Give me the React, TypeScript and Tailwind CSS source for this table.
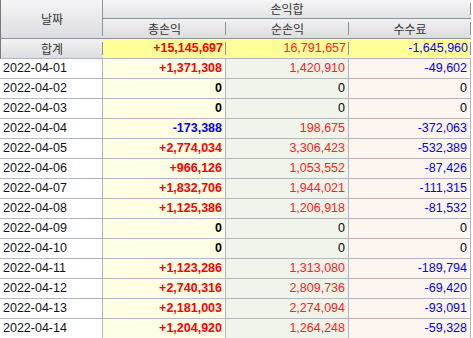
type Row = { date: string; total: string; net: string; fee: string };

const rows: Row[] = [
	{ date: "2022-04-01", total: "+1,371,308", net: "1,420,910", fee: "-49,602" },
	{ date: "2022-04-02", total: "0", net: "0", fee: "0" },
	{ date: "2022-04-03", total: "0", net: "0", fee: "0" },
	{ date: "2022-04-04", total: "-173,388", net: "198,675", fee: "-372,063" },
	{ date: "2022-04-05", total: "+2,774,034", net: "3,306,423", fee: "-532,389" },
	{ date: "2022-04-06", total: "+966,126", net: "1,053,552", fee: "-87,426" },
	{ date: "2022-04-07", total: "+1,832,706", net: "1,944,021", fee: "-111,315" },
	{ date: "2022-04-08", total: "+1,125,386", net: "1,206,918", fee: "-81,532" },
	{ date: "2022-04-09", total: "0", net: "0", fee: "0" },
	{ date: "2022-04-10", total: "0", net: "0", fee: "0" },
	{ date: "2022-04-11", total: "+1,123,286", net: "1,313,080", fee: "-189,794" },
	{ date: "2022-04-12", total: "+2,740,316", net: "2,809,736", fee: "-69,420" },
	{ date: "2022-04-13", total: "+2,181,003", net: "2,274,094", fee: "-93,091" },
	{ date: "2022-04-14", total: "+1,204,920", net: "1,264,248", fee: "-59,328" },
];

function tone(v: string) {
	if (v === "0") return "text-black";
	if (v.startsWith("-")) return "text-[#0000ff]";
	return "text-[#ff0000]";
}

function Sep({ full }: { full?: boolean }) {
	return (
		<span
			className={
				"absolute right-0 w-px bg-[#8e93a0] " +
				(full ? "top-0 bottom-[2px]" : "top-[3px] bottom-[3px]")
			}
		/>
	);
}

function App() {
	const num = "flex items-center justify-end pr-[3px] border-r border-b border-[#b3b3c6]";
	return (
		<div className="w-[473px] h-[338px] overflow-hidden bg-white font-['Liberation_Sans','Noto_Sans_CJK_KR',sans-serif] text-[12.5px]">
			<div className="grid grid-cols-[103px_123px_123px_122px] grid-rows-[19px_20px_20px] auto-rows-[20px]">
				{/* header */}
				<div className="relative row-span-2 flex items-center justify-center border-l border-l-[#7a7a7a] border-b border-b-[#8e93a0] bg-gradient-to-b from-[#f5f5f6] to-[#dcdde1] text-[#333] font-['Noto_Sans_CJK_KR',sans-serif] text-[12px]">
					날짜
					<Sep full />
				</div>
				<div className="relative col-span-3 flex items-center justify-center border-b border-[#8e93a0] bg-gradient-to-b from-[#f5f5f6] to-[#e2e3e6] text-[#333] font-['Noto_Sans_CJK_KR',sans-serif] text-[12px]">
					손익합
					<Sep />
				</div>
				{["총손익", "순손익", "수수료"].map((h) => (
					<div
						key={h}
						className="relative flex items-center justify-center border-b border-[#8e93a0] bg-gradient-to-b from-[#f1f1f2] to-[#dcdde1] text-[#333] font-['Noto_Sans_CJK_KR',sans-serif] text-[12px]"
					>
						{h}
						<Sep />
					</div>
				))}

				{/* sum row */}
				<div className="relative flex items-center justify-center border-l border-l-[#7a7a7a] border-b border-b-[#b3b3c6] bg-gradient-to-b from-[#f3f3f4] to-[#dcdde1] text-[#333] font-['Noto_Sans_CJK_KR',sans-serif] text-[12px]">
					합계
					<Sep />
				</div>
				<div className="relative flex items-center justify-end pr-[3px] border-b border-[#b3b3c6] bg-[#ffff99] font-bold text-[#ff0000]">
					+15,145,697
					<Sep />
				</div>
				<div className="relative flex items-center justify-end pr-[3px] border-b border-[#b3b3c6] bg-[#ffff99] text-[#ff2020]">
					16,791,657
					<Sep />
				</div>
				<div className="relative flex items-center justify-end pr-[3px] border-b border-[#b3b3c6] bg-[#ffff99] text-[#0000ff]">
					-1,645,960
					<Sep />
				</div>

				{/* data rows */}
				{rows.map((r) => (
					<div key={r.date} className="contents">
						<div className="flex items-center pl-[3px] border-r border-b border-[#b3b3c6] bg-white text-[#111]">
							{r.date}
						</div>
						<div className={num + " bg-[#ffffe6] font-bold " + tone(r.total)}>{r.total}</div>
						<div className={num + " bg-[#f1f4ea] " + (r.net === "0" ? "text-black" : "text-[#ff2020]")}>
							{r.net}
						</div>
						<div className={num + " bg-[#fcf5f0] " + tone(r.fee)}>{r.fee}</div>
					</div>
				))}
			</div>
		</div>
	);
}

export default App;
